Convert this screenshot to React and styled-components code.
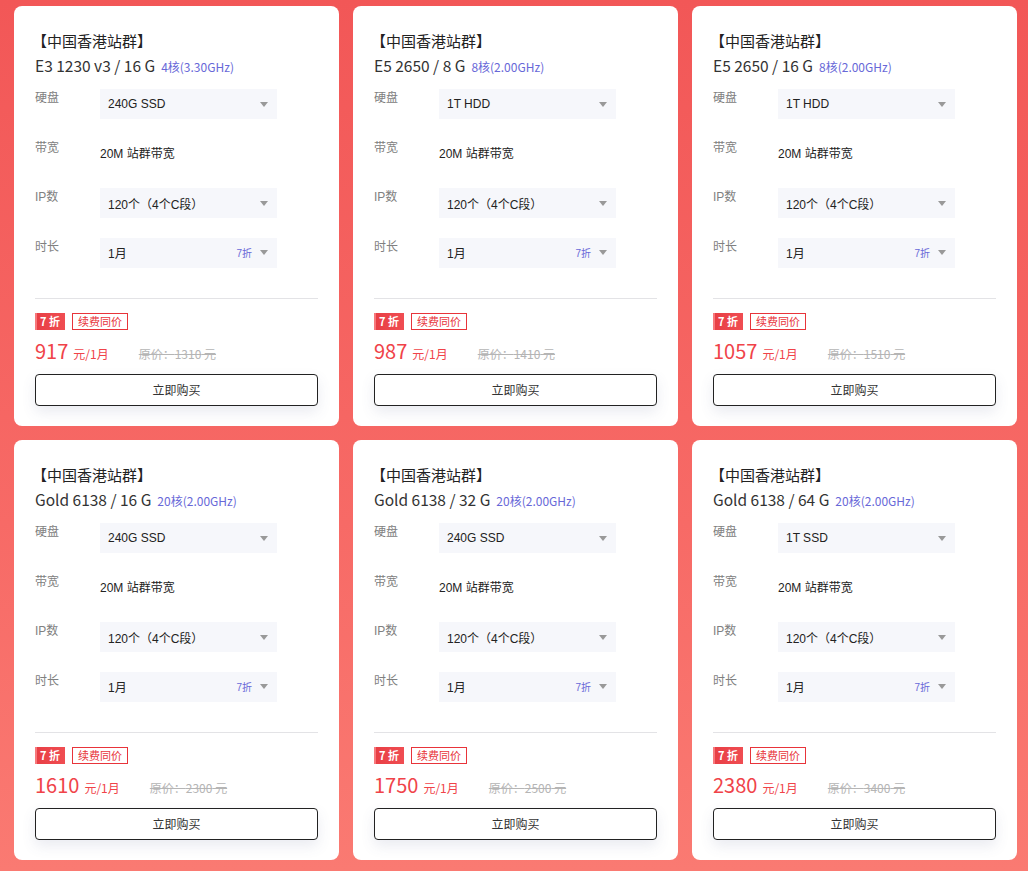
import styled, { createGlobalStyle } from "styled-components";

const GlobalStyle = createGlobalStyle`
  html, body {
    margin: 0;
    padding: 0;
  }
  body {
    font-family: "Liberation Sans", "Noto Sans CJK SC", sans-serif;
    background: linear-gradient(180deg, #f25757 0%, #f76a66 60%, #fa7a72 100%);
    min-height: 871px;
  }
`

const Page = styled.div`
  display: grid;
  grid-template-columns: repeat(3, 325px);
  gap: 14px;
  padding: 6px 0 0 14px;
`
const Card = styled.div`
  background: #fff;
  border-radius: 8px;
  height: 420px;
  box-sizing: border-box;
  padding: 24px 21px 0 21px;
  display: flex;
  flex-direction: column;
`
const Title = styled.div`
  font-family: "Noto Sans CJK SC", sans-serif;
  font-size: 15px;
  line-height: 22px;
  color: #222;
  margin-left: -3px;
`
const Spec = styled.div`
  font-family: "Noto Sans CJK SC", sans-serif;
  font-size: 15.5px;
  line-height: 26px;
  color: #333;
  display: flex;
  align-items: baseline;
  gap: 6px;
`
const Cores = styled.span`
  font-size: 12px;
  color: #6868d8;
`
const Rows = styled.div`
  margin-top: 9px;
  display: flex;
  flex-direction: column;
  gap: 19.5px;
`
const Row = styled.div`
  display: flex;
  height: 30px;
`
const Label = styled.div`
  width: 65px;
  font-size: 12px;
  color: #808080;
  line-height: 18px;
`
const Select = styled.div`
  width: 177px;
  height: 30px;
  background: #f6f7fb;
  display: flex;
  align-items: center;
  padding: 0 8px;
  box-sizing: border-box;
  font-size: 12px;
  color: #222;
`
const Value = styled.span`
  flex: 1;
`
const Discount = styled.span`
  font-size: 10px;
  color: #6868d8;
  margin-right: 8px;
`
const Arrow = styled.span`
  width: 0;
  height: 0;
  border-left: 4.5px solid transparent;
  border-right: 4.5px solid transparent;
  border-top: 5px solid #999;
  margin-right: 1px;
`
const Plain = styled.div`
  font-size: 12px;
  color: #222;
  line-height: 30px;
`
const Divider = styled.div`
  height: 1px;
  background: #e3e3e6;
  margin-top: 30px;
`
const Tags = styled.div`
  display: flex;
  gap: 7px;
  margin-top: 14px;
`
const RedTag = styled.span`
  height: 17px;
  line-height: 17px;
  padding: 0 5px 0 5px;
  background: linear-gradient(90deg, #f7797c 0, #f7797c 2px, #e83f45 2px, #f04d52 100%);
  color: #fff;
  font-weight: bold;
  font-size: 11px;
  font-family: "Noto Sans CJK SC", sans-serif;
`
const OutlineTag = styled.span`
  height: 17px;
  line-height: 15px;
  box-sizing: border-box;
  border: 1px solid #e8343a;
  color: #e8343a;
  font-size: 11px;
  padding: 0 5px;
  font-family: "Noto Sans CJK SC", sans-serif;
`
const PriceLine = styled.div`
  display: flex;
  align-items: baseline;
  margin-top: 6px;
  height: 32px;
  font-family: "Noto Sans CJK SC", sans-serif;
`
const Price = styled.span`
  font-size: 20px;
  color: #f04349;
`
const Unit = styled.span`
  font-size: 12px;
  color: #f04349;
  margin-left: 5px;
`
const Original = styled.span`
  font-size: 12px;
  color: #b5b5b5;
  text-decoration: line-through;
  margin-left: 30px;
`
const BuyButton = styled.button`
  margin-top: 6px;
  height: 32px;
  width: 100%;
  background: #fff;
  border: 1px solid #222;
  border-radius: 4px;
  font-family: "Noto Sans CJK SC", sans-serif;
  font-size: 12px;
  color: #333;
  box-shadow: 0 6px 14px rgba(80, 90, 140, 0.12);
  cursor: pointer;
`

const plans = [
  { spec: "E3 1230 v3 / 16 G", cores: "4核(3.30GHz)", disk: "240G SSD", price: 917, orig: 1310 },
  { spec: "E5 2650 / 8 G", cores: "8核(2.00GHz)", disk: "1T HDD", price: 987, orig: 1410 },
  { spec: "E5 2650 / 16 G", cores: "8核(2.00GHz)", disk: "1T HDD", price: 1057, orig: 1510 },
  { spec: "Gold 6138 / 16 G", cores: "20核(2.00GHz)", disk: "240G SSD", price: 1610, orig: 2300 },
  { spec: "Gold 6138 / 32 G", cores: "20核(2.00GHz)", disk: "240G SSD", price: 1750, orig: 2500 },
  { spec: "Gold 6138 / 64 G", cores: "20核(2.00GHz)", disk: "1T SSD", price: 2380, orig: 3400 },
];

const Plan = ({ p }) => (
  <Card>
    <Title>【中国香港站群】</Title>
    <Spec>
      {p.spec}
      <Cores>{p.cores}</Cores>
    </Spec>
    <Rows>
      <Row>
        <Label>硬盘</Label>
        <Select>
          <Value>{p.disk}</Value>
          <Arrow />
        </Select>
      </Row>
      <Row>
        <Label>带宽</Label>
        <Plain>20M 站群带宽</Plain>
      </Row>
      <Row>
        <Label>IP数</Label>
        <Select>
          <Value>120个（4个C段）</Value>
          <Arrow />
        </Select>
      </Row>
      <Row>
        <Label>时长</Label>
        <Select>
          <Value>1月</Value>
          <Discount>7折</Discount>
          <Arrow />
        </Select>
      </Row>
    </Rows>
    <Divider />
    <Tags>
      <RedTag>7 折</RedTag>
      <OutlineTag>续费同价</OutlineTag>
    </Tags>
    <PriceLine>
      <Price>{p.price}</Price>
      <Unit>元/1月</Unit>
      <Original>原价：{p.orig} 元</Original>
    </PriceLine>
    <BuyButton>立即购买</BuyButton>
  </Card>
);

const App = () => (
  <>
    <GlobalStyle />
    <Page>
      {plans.map((p) => (
        <Plan key={p.spec} p={p} />
      ))}
    </Page>
  </>
);

export default App;
